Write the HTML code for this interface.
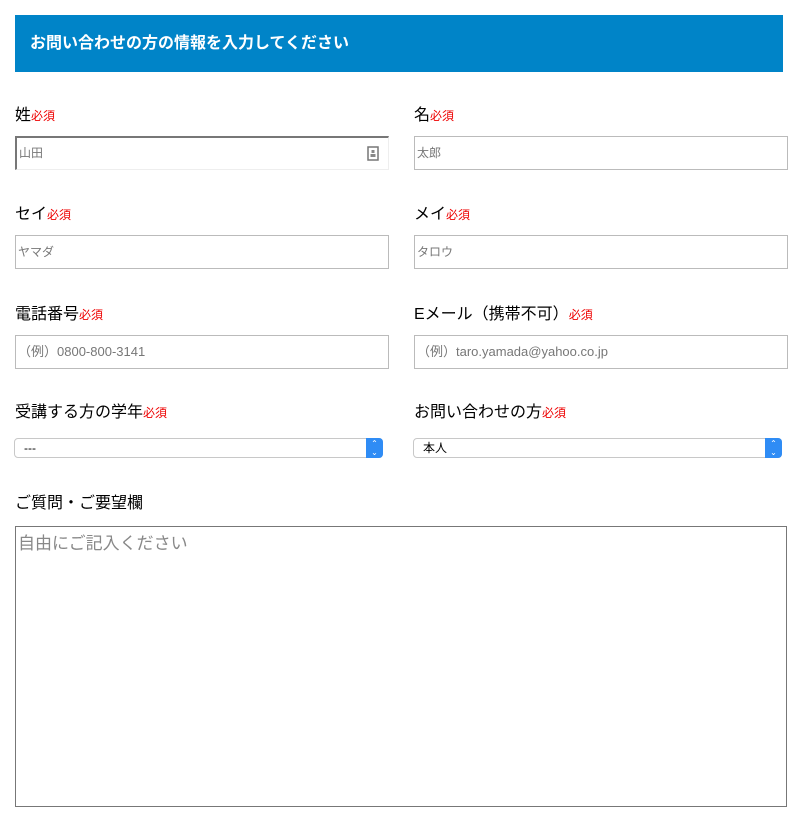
<!DOCTYPE html>
<html><head><meta charset="utf-8"><style>
body{margin:0;background:#fff;font-family:"Liberation Sans","Noto Sans CJK JP",sans-serif;width:801px;height:819px;position:relative;overflow:hidden}
.hd{position:absolute;left:15px;top:15px;width:768px;height:57px;background:#0084c8;color:#fff;font-size:16px;font-weight:bold;line-height:57px;box-sizing:border-box;padding-left:15px}
.lb{position:absolute;font-size:16px;color:#000;line-height:20px}
.lb span{color:#e00;font-size:12px}
.in{position:absolute;height:34px;width:374px;box-sizing:border-box;border:1px solid #bbb;font-size:12px;color:#777;line-height:32px;padding-left:2px;background:#fff}
.sel{position:absolute;height:20px;width:369px;box-sizing:border-box;border:1px solid #c8c8c8;border-radius:4px;font-size:12px;line-height:18px;padding-left:9px;color:#000}
.sel i{position:absolute;right:-1px;top:-1px;width:17px;height:20px;background:#2f8cf5;border-radius:0 4px 4px 0;color:#fff;font-style:normal;font-size:8px;line-height:9px;text-align:center;padding-top:1px;box-sizing:border-box}
</style></head><body>
<div class="hd">お問い合わせの方の情報を入力してください</div>
<div class="lb" style="left:15px;top:106px">姓<span>必須</span></div>
<div class="lb" style="left:414px;top:106px">名<span>必須</span></div>
<div class="in" style="left:15px;top:136px;border-width:2px 1px 1px 2px;border-top-color:#777;border-left-color:#777;border-right-color:#eee;border-bottom-color:#eee;line-height:31px">山田<svg style="position:absolute;right:9px;top:8px" width="12" height="15" viewBox="0 0 12 15"><rect x="1" y="1" width="10" height="13" fill="#fff" stroke="#777" stroke-width="1.5"/><rect x="4.5" y="4" width="3" height="3" fill="#888"/><rect x="3.5" y="8" width="5" height="3" fill="#888"/></svg></div>
<div class="in" style="left:414px;top:136px">太郎</div>
<div class="lb" style="left:15px;top:205px">セイ<span>必須</span></div>
<div class="lb" style="left:414px;top:205px">メイ<span>必須</span></div>
<div class="in" style="left:15px;top:235px">ヤマダ</div>
<div class="in" style="left:414px;top:235px">タロウ</div>
<div class="lb" style="left:15px;top:305px">電話番号<span>必須</span></div>
<div class="lb" style="left:414px;top:305px">Eメール（携帯不可）<span>必須</span></div>
<div class="in" style="left:15px;top:335px;font-size:13px">（例）0800-800-3141</div>
<div class="in" style="left:414px;top:335px;font-size:13px">（例）taro.yamada@yahoo.co.jp</div>
<div class="lb" style="left:15px;top:403px">受講する方の学年<span>必須</span></div>
<div class="lb" style="left:414px;top:403px">お問い合わせの方<span>必須</span></div>
<div class="sel" style="left:14px;top:438px">---<i>⌃<br>⌄</i></div>
<div class="sel" style="left:413px;top:438px">本人<i>⌃<br>⌄</i></div>
<div class="lb" style="left:15px;top:494px">ご質問・ご要望欄</div>
<div style="position:absolute;left:15px;top:526px;width:772px;height:281px;box-sizing:border-box;border:1px solid #777;font-size:17px;color:#888;padding:2px 2px">自由にご記入ください</div>
</body></html>
